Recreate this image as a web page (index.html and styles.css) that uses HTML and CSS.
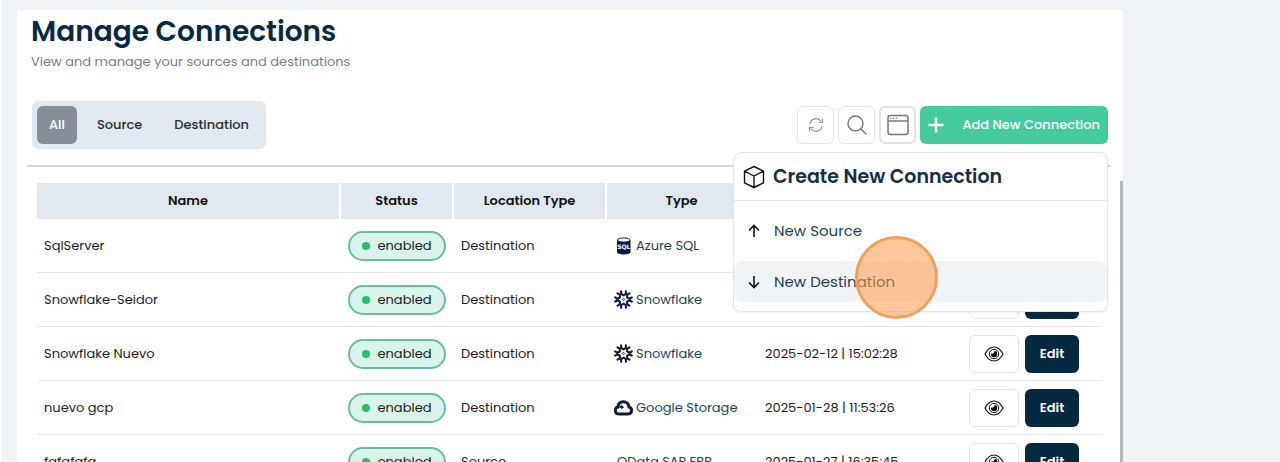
FILE: index.html
```html
<!DOCTYPE html>
<html lang="en">
<head>
<meta charset="utf-8">
<title>Manage Connections</title>
<link rel="stylesheet" href="styles.css">
</head>
<body>
<svg class="sprite" aria-hidden="true">
  <symbol id="eye" viewBox="0 0 20 16">
    <path d="M1 8C3.500 3.400 6.500 1 10 1s6.500 2.400 9 7c-2.500 4.600-5.500 7-9 7S3.500 12.600 1 8z" fill="none" stroke="currentColor" stroke-width="1.200" stroke-linejoin="round"/>
    <circle cx="10" cy="8" r="4.700" fill="none" stroke="currentColor" stroke-width="1"/>
    <path d="M10.500 4.800c.2 2.200-1.500 3.200-3.600 2.700A3.200 3.200 0 1 0 10.500 4.800z" fill="currentColor"/>
  </symbol>
  <symbol id="snowflake" viewBox="0 0 20 20">
    <g fill="none" stroke="currentColor" stroke-width="2.200" stroke-linecap="round" stroke-linejoin="round">
      <path id="flake-arm" d="M7.500 1.300v2.800L10 5.600l2.500-1.500V1.300"/>
      <use href="#flake-arm" transform="rotate(60 10 10)"/>
      <use href="#flake-arm" transform="rotate(120 10 10)"/>
      <use href="#flake-arm" transform="rotate(180 10 10)"/>
      <use href="#flake-arm" transform="rotate(240 10 10)"/>
      <use href="#flake-arm" transform="rotate(300 10 10)"/>
    </g>
    <path d="M10 8.700L11.300 10 10 11.300 8.700 10z" fill="none" stroke="currentColor" stroke-width="1"/>
  </symbol>
</svg>
<main class="page">
  <section class="card">
    <header class="heading">
      <h1 class="title">Manage Connections</h1>
      <p class="subtitle">View and manage your sources and destinations</p>
    </header>
    <div class="bar">
      <div class="tabs">
        <button class="tab tab-active" type="button">All</button>
        <button class="tab" type="button">Source</button>
        <button class="tab" type="button">Destination</button>
      </div>
      <div class="tools">
        <button class="tool" type="button" aria-label="Refresh">
          <svg width="16" height="16" viewBox="0 0 16 16" fill="none" stroke="#8d949d" stroke-width="1.200"><path d="M2 7a6 6 0 0 1 11-2.500M14.500 1.500v4h-4M14 9a6 6 0 0 1-11 2.500M1.500 14.500v-4h4"/></svg>
        </button>
        <button class="tool" type="button" aria-label="Search">
          <svg width="20" height="20" viewBox="0 0 20 20" fill="none" stroke="#777" stroke-width="1.400" stroke-linecap="round"><circle cx="8.500" cy="8.500" r="7.500"/><path d="M14 14l5 5"/></svg>
        </button>
        <button class="tool tool-strong" type="button" aria-label="Window">
          <svg width="22" height="22" viewBox="0 0 22 22" fill="none" stroke="#777" stroke-width="1.500"><rect x="1" y="1.500" width="20" height="19" rx="2.500"/><path d="M1 7h20"/><path d="M3 4.300h1.300M5.800 4.300h1.300M8.600 4.300h1.300" stroke-width="1.300"/></svg>
        </button>
        <div class="add-wrap">
          <button class="add" type="button">
            <svg width="16" height="16" viewBox="0 0 16 16" stroke="#fff" stroke-width="2.600"><path d="M8 .5v15M.5 8h15"/></svg>
            <span>Add New Connection</span>
          </button>
          <div class="menu">
            <h2 class="menu-title">
              <svg width="22" height="24" viewBox="0 0 22 24" fill="none" stroke="#111" stroke-width="1.400" stroke-linejoin="round"><path d="M11 1.500l9.500 4.700v11.600L11 22.500l-9.500-4.700V6.200zM1.500 6.200L11 11l9.500-4.800M11 11v11.500"/></svg>
              Create New Connection
            </h2>
            <div class="menu-items">
              <button class="item" type="button">
                <svg width="12" height="14" viewBox="0 0 12 14" fill="none" stroke="#111" stroke-width="1.600"><path d="M6 13V1.500M1 6.500l5-5 5 5"/></svg>
                New Source
              </button>
              <button class="item item-hover" type="button">
                <svg width="12" height="14" viewBox="0 0 12 14" fill="none" stroke="#111" stroke-width="1.600"><path d="M6 1v11.500M1 7.500l5 5 5-5"/></svg>
                New Destination
              </button>
            </div>
            <span class="pointer"></span>
          </div>
        </div>
      </div>
    </div>
    <div class="list">
      <table class="table">
        <colgroup><col><col class="col-status"><col class="col-location"><col class="col-type"><col class="col-date"><col class="col-actions"></colgroup>
        <thead>
          <tr><th>Name</th><th>Status</th><th>Location Type</th><th>Type</th><th></th><th></th></tr>
        </thead>
        <tbody>
          <tr>
            <td>SqlServer</td><td><span class="badge">enabled</span></td><td>Destination</td>
            <td><span class="kind"><svg width="19" height="18" viewBox="0 0 19 18"><path d="M3 3v12c0 3.300 13.500 3.300 13.500 0V3z" fill="#0d1b3d"/><ellipse cx="9.750" cy="3" rx="6.300" ry="2.100" fill="#fff" stroke="#0d1b3d"/><text class="sql" x="9.750" y="12" text-anchor="middle">SQL</text></svg>Azure SQL</span></td>
            <td></td>
            <td></td>
          </tr>
          <tr>
            <td>Snowflake-Seidor</td><td><span class="badge">enabled</span></td><td>Destination</td>
            <td><span class="kind"><svg width="19" height="19"><use href="#snowflake"/></svg>Snowflake</span></td>
            <td></td>
            <td><div class="actions"><button class="view" type="button" aria-label="View"></button><button class="edit" type="button" aria-label="Edit"></button></div></td>
          </tr>
          <tr>
            <td>Snowflake Nuevo</td><td><span class="badge">enabled</span></td><td>Destination</td>
            <td><span class="kind"><svg width="19" height="19"><use href="#snowflake"/></svg>Snowflake</span></td>
            <td>2025-02-12 | 15:02:28</td>
            <td><div class="actions"><button class="view" type="button" aria-label="View"><svg width="20" height="16"><use href="#eye"/></svg></button><button class="edit" type="button">Edit</button></div></td>
          </tr>
          <tr>
            <td>nuevo gcp</td><td><span class="badge">enabled</span></td><td>Destination</td>
            <td><span class="kind"><svg width="19" height="16" viewBox="0 0 19 16"><path d="M5.500 14C-.2 14 .6 7.600 4 7 4.200 3.500 6.400 1.800 9.300 1.800S14.600 3.600 15 7c3.600.8 3.800 7-1.500 7z" fill="none" stroke="#0d1b3d" stroke-width="3"/><path d="M5 6.500l3-1.500 2 2.500-2.500 1.500z" fill="#0d1b3d"/></svg>Google Storage</span></td>
            <td>2025-01-28 | 11:53:26</td>
            <td><div class="actions"><button class="view" type="button" aria-label="View"><svg width="20" height="16"><use href="#eye"/></svg></button><button class="edit" type="button">Edit</button></div></td>
          </tr>
          <tr>
            <td>fafafafa</td><td><span class="badge">enabled</span></td><td>Source</td>
            <td><span class="kind kind-plain">OData SAP ERP</span></td>
            <td>2025-01-27 | 16:35:45</td>
            <td><div class="actions"><button class="view" type="button" aria-label="View"><svg width="20" height="16"><use href="#eye"/></svg></button><button class="edit" type="button">Edit</button></div></td>
          </tr>
        </tbody>
      </table>
    </div>
  </section>
</main>
</body>
</html>
```
FILE: styles.css
```css
* { box-sizing: border-box; }
body {
  margin: 0;
  height: 100vh;
  overflow: hidden;
  background: #f0f3f8;
  color: #1c1c1c;
  font: 13px/20px Poppins, Inter, sans-serif;
}
button { font: inherit; color: inherit; border: 0; background: none; padding: 0; margin: 0; }
svg { display: block; flex: none; }
.sprite { position: absolute; width: 0; height: 0; }
.page {
  height: 100%;
  padding: 10px 157px 0 15px;
  border-left: 2px solid #f8fafc;
  display: flex;
}
.card {
  flex: 1;
  min-width: 0;
  background: #fff;
  display: flex;
  flex-direction: column;
}
.heading { padding: 4px 15px 0 14px; }
.title { margin: 0; font-size: 28px; line-height: 36px; font-weight: 600; color: #032a43; }
.subtitle { margin: 2px 0 0; color: #7a7d80; }
.bar {
  display: flex;
  justify-content: space-between;
  align-items: center;
  margin: 29px 12px 0 10px;
  padding: 0 3px 16px 5px;
  border-bottom: 2px solid #d5d7db;
}
.tabs { display: flex; gap: 8px; padding: 5px; background: #e1e8f0; border-radius: 6px; }
.tab { height: 38px; padding: 0 12px; border-radius: 6px; font-weight: 500; color: #2b2f36; }
.tab-active { background: #868d99; color: #fff; }
.tools { display: flex; gap: 4px; }
.tool {
  width: 37px;
  height: 38px;
  display: grid;
  place-items: center;
  border: 1px solid #e3e5e9;
  border-radius: 6px;
}
.tool-strong { border: 2px solid #e0e2e7; }
.add-wrap { position: relative; }
.add {
  height: 38px;
  width: 188px;
  display: flex;
  align-items: center;
  justify-content: space-between;
  padding: 0 8px;
  background: #46cb9f;
  color: #fff;
  font-weight: 500;
  border-radius: 6px;
}
.menu {
  position: absolute;
  z-index: 2;
  top: calc(100% + 8px);
  right: 0;
  width: 375px;
  background: #fff;
  border: 1px solid #e3e5e9;
  border-radius: 8px;
  box-shadow: 0 1px 2px #0000000f;
}
.menu-title {
  display: flex;
  align-items: center;
  gap: 8px;
  height: 48px;
  margin: 0;
  padding: 0 9px;
  border-bottom: 1px solid #e3e5e9;
  font-size: 19px;
  font-weight: 600;
  color: #10304a;
}
.menu-items { display: flex; flex-direction: column; gap: 10px; padding: 9px 0; }
.item {
  display: flex;
  align-items: center;
  gap: 14px;
  height: 41px;
  padding: 0 14px;
  border-radius: 8px;
  font-size: 15px;
  color: #1f4053;
}
.item-hover { background: #f0f3f8; }
.pointer {
  position: absolute;
  left: 121px;
  top: 83px;
  width: 83px;
  height: 83px;
  border: 3px solid #f3a05a;
  border-radius: 50%;
  background: #ff9a4a8c;
}
.list {
  flex: 1;
  min-height: 0;
  overflow: hidden;
  margin-top: 14px;
  padding: 2px 19px 0 20px;
  border-right: 3px solid #b4b7bc;
}
.table { width: 100%; table-layout: fixed; border-collapse: separate; border-spacing: 0; }
.col-status { width: 113px; }
.col-location { width: 153px; }
.col-type { width: 151px; }
.col-date { width: 204px; }
.col-actions { width: 139px; }
th { height: 36px; padding: 0; background: #e1e8f0; border-right: 2px solid #fff; font-weight: 600; color: #111; }
td { height: 54px; padding: 0 0 0 7px; border-bottom: 1px solid #e5e7ea; white-space: nowrap; }
.badge {
  display: flex;
  align-items: center;
  justify-content: center;
  gap: 7px;
  width: 98px;
  height: 30px;
  border: 2px solid #68bd9d;
  border-radius: 15px;
  background: #d8f3e9;
}
.badge::before { content: ""; width: 8px; height: 8px; border-radius: 50%; background: #27c063; }
.kind { display: flex; align-items: center; gap: 3px; color: #1f4053; }
.kind svg { color: #0d1b3d; }
.kind-plain { padding-left: 3px; }
.sql { font: bold 6px "DejaVu Sans", sans-serif; fill: #fff; }
.actions { display: flex; gap: 6px; }
.view { width: 50px; height: 38px; display: grid; place-items: center; border: 1px solid #e3e5e9; border-radius: 6px; color: #111; }
.edit { width: 54px; height: 38px; border-radius: 6px; background: #03293f; color: #fff; font-weight: 600; }
```
